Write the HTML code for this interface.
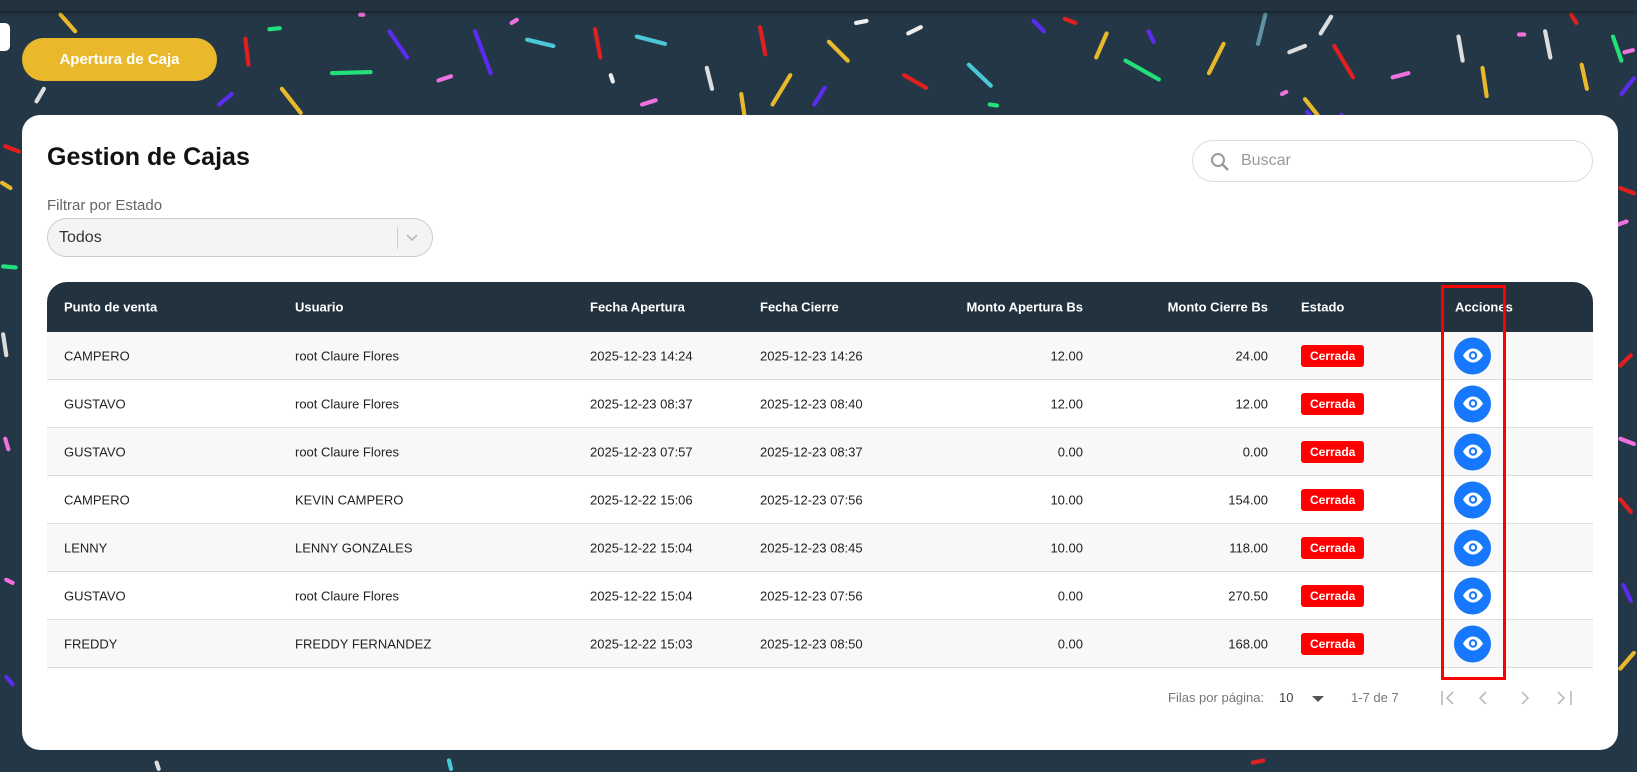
<!DOCTYPE html>
<html><head><meta charset="utf-8"><style>
*{box-sizing:border-box;margin:0;padding:0}
body{width:1637px;height:772px;overflow:hidden;background:#243746;font-family:"Liberation Sans",sans-serif;position:relative}
#bg{position:absolute;left:0;top:0;width:1637px;height:772px}
.topbar{position:absolute;left:0;top:0;width:1637px;height:11px;background:#22323f;box-shadow:0 2px 4px rgba(0,0,0,.4)}
.x{position:absolute;left:-8px;top:23px;width:18px;height:28px;background:#fff;border-radius:5px}
.btn{position:absolute;left:22px;top:38px;width:195px;height:43px;background:#e9b92b;border-radius:22px;color:#fff;font-weight:bold;font-size:15px;line-height:43px;text-align:center}
.card{position:absolute;left:22px;top:115px;width:1596px;height:635px;background:#fff;border-radius:18px}
.abs{position:absolute}
h1{position:absolute;left:25px;top:28px;font-size:25px;font-weight:bold;color:#111}
.search{position:absolute;left:1170px;top:25px;width:401px;height:42px;border:1px solid #ddd;border-radius:21px}
.search span{position:absolute;left:48px;top:11px;font-size:16px;color:#999}
.lbl{position:absolute;left:25px;top:82px;font-size:15px;color:#666}
.sel{position:absolute;left:25px;top:103px;width:386px;height:39px;border:1px solid #ccc;background:#f4f4f4;border-radius:20px}
.sel span{position:absolute;left:11px;top:10px;font-size:16px;color:#333}
.sel i{position:absolute;left:349px;top:8px;width:1px;height:22px;background:#ccc}
.table{position:absolute;left:25px;top:167px;width:1546px;height:387px;border-radius:20px 20px 0 0;overflow:hidden}
.th{height:50px;background:#22323f;color:#fff;font-weight:bold;font-size:13px;position:relative}
.row{height:48px;position:relative;border-bottom:1px solid #ddd;font-size:13px;color:#222;background:#f8f8f8}
.row:nth-child(odd){background:#fff}
.c{position:absolute;top:50%;transform:translateY(-50%);white-space:nowrap}
.r{text-align:right}
.badge{background:#f00;color:#fff;font-weight:bold;font-size:12px;padding:4px 9px;border-radius:3px}
.eye{width:37px;height:37px;border-radius:50%;background:#1677ff;display:flex;align-items:center;justify-content:center}
.redbox{position:absolute;left:1419px;top:170px;width:65px;height:395px;border:3px solid #f00}
.pg{position:absolute;top:575px;font-size:13px;color:#777}
</style></head><body>
<svg id="bg" viewBox="0 0 1568 739" preserveAspectRatio="none" stroke-linecap="round" stroke-width="4">
<g>
<line x1="58" y1="14" x2="72" y2="30" stroke="#e9b92b"/>
<line x1="235" y1="37" x2="238" y2="62" stroke="#e02020"/>
<line x1="258" y1="28" x2="268" y2="27" stroke="#22e07a"/>
<line x1="373" y1="30" x2="390" y2="55" stroke="#5b2cf0"/>
<line x1="318" y1="70" x2="355" y2="69" stroke="#22e07a"/>
<line x1="345" y1="14" x2="348" y2="14" stroke="#f070e0"/>
<line x1="270" y1="85" x2="288" y2="108" stroke="#e9b92b"/>
<line x1="210" y1="100" x2="222" y2="90" stroke="#5b2cf0"/>
<line x1="42" y1="85" x2="35" y2="97" stroke="#ddd"/>
<line x1="420" y1="77" x2="432" y2="73" stroke="#f070e0"/>
<line x1="455" y1="30" x2="470" y2="70" stroke="#5b2cf0"/>
<line x1="490" y1="22" x2="495" y2="19" stroke="#f070e0"/>
<line x1="505" y1="38" x2="530" y2="44" stroke="#4ac8d8"/>
<line x1="570" y1="28" x2="575" y2="55" stroke="#e02020"/>
<line x1="585" y1="72" x2="587" y2="78" stroke="#eee"/>
<line x1="610" y1="35" x2="637" y2="42" stroke="#4ac8d8"/>
<line x1="615" y1="100" x2="628" y2="96" stroke="#f070e0"/>
<line x1="677" y1="65" x2="682" y2="85" stroke="#ddd"/>
<line x1="710" y1="90" x2="713" y2="110" stroke="#e9b92b"/>
<line x1="728" y1="26" x2="733" y2="52" stroke="#e02020"/>
<line x1="740" y1="100" x2="757" y2="72" stroke="#e9b92b"/>
<line x1="794" y1="40" x2="812" y2="58" stroke="#e9b92b"/>
<line x1="780" y1="100" x2="790" y2="84" stroke="#5b2cf0"/>
<line x1="820" y1="22" x2="830" y2="20" stroke="#eee"/>
<line x1="866" y1="72" x2="887" y2="84" stroke="#e02020"/>
<line x1="870" y1="32" x2="882" y2="26" stroke="#eee"/>
<line x1="928" y1="62" x2="949" y2="82" stroke="#4ac8d8"/>
<line x1="948" y1="100" x2="955" y2="101" stroke="#22e07a"/>
<line x1="990" y1="20" x2="1000" y2="30" stroke="#5b2cf0"/>
<line x1="1020" y1="18" x2="1030" y2="22" stroke="#e02020"/>
<line x1="1050" y1="55" x2="1060" y2="32" stroke="#e9b92b"/>
<line x1="1078" y1="58" x2="1110" y2="76" stroke="#22e07a"/>
<line x1="1100" y1="30" x2="1105" y2="40" stroke="#5b2cf0"/>
<line x1="1158" y1="70" x2="1172" y2="42" stroke="#e9b92b"/>
<line x1="1205" y1="42" x2="1212" y2="14" stroke="#5f93a3"/>
<line x1="1235" y1="50" x2="1250" y2="44" stroke="#ddd"/>
<line x1="1265" y1="32" x2="1275" y2="16" stroke="#ddd"/>
<line x1="1228" y1="90" x2="1232" y2="88" stroke="#f070e0"/>
<line x1="1250" y1="95" x2="1262" y2="110" stroke="#e9b92b"/>
<line x1="1252" y1="107" x2="1259" y2="115" stroke="#5b2cf0"/>
<line x1="1278" y1="44" x2="1296" y2="74" stroke="#e02020"/>
<line x1="1285" y1="110" x2="1290" y2="118" stroke="#5b2cf0"/>
<line x1="1334" y1="74" x2="1349" y2="70" stroke="#f070e0"/>
<line x1="1397" y1="35" x2="1401" y2="58" stroke="#ddd"/>
<line x1="1420" y1="65" x2="1424" y2="92" stroke="#e9b92b"/>
<line x1="1455" y1="33" x2="1460" y2="33" stroke="#f070e0"/>
<line x1="1505" y1="14" x2="1510" y2="22" stroke="#e02020"/>
<line x1="1480" y1="30" x2="1485" y2="55" stroke="#ddd"/>
<line x1="1515" y1="62" x2="1520" y2="85" stroke="#e9b92b"/>
<line x1="1545" y1="35" x2="1553" y2="58" stroke="#22e07a"/>
<line x1="1556" y1="50" x2="1564" y2="48" stroke="#f070e0"/>
<line x1="1553" y1="90" x2="1565" y2="75" stroke="#5b2cf0"/>
<line x1="1552" y1="180" x2="1565" y2="185" stroke="#e02020"/>
<line x1="1550" y1="215" x2="1558" y2="212" stroke="#f070e0"/>
<line x1="1552" y1="350" x2="1562" y2="340" stroke="#e02020"/>
<line x1="1552" y1="420" x2="1565" y2="425" stroke="#f070e0"/>
<line x1="1552" y1="478" x2="1562" y2="490" stroke="#e02020"/>
<line x1="1552" y1="640" x2="1565" y2="625" stroke="#e9b92b"/>
<line x1="1555" y1="560" x2="1562" y2="575" stroke="#5b2cf0"/>
<line x1="5" y1="140" x2="18" y2="145" stroke="#e02020"/>
<line x1="2" y1="175" x2="10" y2="180" stroke="#e9b92b"/>
<line x1="3" y1="255" x2="15" y2="256" stroke="#22e07a"/>
<line x1="3" y1="320" x2="6" y2="340" stroke="#ddd"/>
<line x1="5" y1="420" x2="8" y2="430" stroke="#f070e0"/>
<line x1="6" y1="648" x2="12" y2="655" stroke="#5b2cf0"/>
<line x1="6" y1="555" x2="12" y2="558" stroke="#f070e0"/>
<line x1="150" y1="730" x2="152" y2="736" stroke="#ddd"/>
<line x1="430" y1="728" x2="432" y2="736" stroke="#4ac8d8"/>
<line x1="1200" y1="730" x2="1210" y2="728" stroke="#e02020"/>
</g></svg>
<div class="topbar"></div>
<div class="x"></div>
<div class="btn">Apertura de Caja</div>
<div class="card">
<h1>Gestion de Cajas</h1>
<div class="search"><svg class="abs" style="left:17px;top:11px" width="20" height="20" viewBox="0 0 20 20"><circle cx="8" cy="8" r="6" fill="none" stroke="#999" stroke-width="2"/><line x1="12.5" y1="12.5" x2="18" y2="18" stroke="#999" stroke-width="2.4"/></svg><span>Buscar</span></div>
<div class="lbl">Filtrar por Estado</div>
<div class="sel"><span>Todos</span><i></i><svg class="abs" style="left:358px;top:14px" width="12" height="10" viewBox="0 0 12 10"><path d="M1 2l5 5 5-5" fill="none" stroke="#bbb" stroke-width="1.6"/></svg></div>
<div class="table">
<div class="th">
<span class="c" style="left:17px">Punto de venta</span>
<span class="c" style="left:248px">Usuario</span>
<span class="c" style="left:543px">Fecha Apertura</span>
<span class="c" style="left:713px">Fecha Cierre</span>
<span class="c r" style="right:510px">Monto Apertura Bs</span>
<span class="c r" style="right:325px">Monto Cierre Bs</span>
<span class="c" style="left:1254px">Estado</span>
<span class="c" style="left:1408px">Acciones</span>
</div>
<div id="rows"></div>
</div>
<div class="redbox"></div>
<div class="pg" style="left:1146px">Filas por página:</div>
<div class="pg" style="left:1257px;color:#444">10</div>
<svg class="abs" style="left:1290px;top:581px" width="12" height="7"><path d="M0 0h12L6 6z" fill="#555"/></svg>
<div class="pg" style="left:1329px">1-7 de 7</div>
<svg class="abs" style="left:1418px;top:574px" width="140" height="18" viewBox="0 0 140 18" fill="none" stroke="#bbb" stroke-width="1.6"><path d="M2 2v14M13 3l-6 6 6 6"/><path d="M46 3l-6 6 6 6"/><path d="M82 3l6 6-6 6"/><path d="M118 3l6 6-6 6M131 2v14"/></svg>
</div>
<script>
const d=[["CAMPERO","root Claure Flores","2025-12-23 14:24","2025-12-23 14:26","12.00","24.00"],
["GUSTAVO","root Claure Flores","2025-12-23 08:37","2025-12-23 08:40","12.00","12.00"],
["GUSTAVO","root Claure Flores","2025-12-23 07:57","2025-12-23 08:37","0.00","0.00"],
["CAMPERO","KEVIN CAMPERO","2025-12-22 15:06","2025-12-23 07:56","10.00","154.00"],
["LENNY","LENNY GONZALES","2025-12-22 15:04","2025-12-23 08:45","10.00","118.00"],
["GUSTAVO","root Claure Flores","2025-12-22 15:04","2025-12-23 07:56","0.00","270.50"],
["FREDDY","FREDDY FERNANDEZ","2025-12-22 15:03","2025-12-23 08:50","0.00","168.00"]];
const eye='<svg width="22" height="16" viewBox="0 0 22 16"><path d="M1 8C4 3 7.5 1 11 1s7 2 10 7c-3 5-6.5 7-10 7S4 13 1 8z" fill="#fff"/><circle cx="11" cy="8" r="4.2" fill="#1677ff"/><circle cx="11" cy="8" r="2.2" fill="#fff"/></svg>';
let h='';d.forEach((r,i)=>{h+=`<div class="row" style="background:${i%2?'#fff':'#f8f8f8'}"><span class="c" style="left:17px">${r[0]}</span><span class="c" style="left:248px">${r[1]}</span><span class="c" style="left:543px">${r[2]}</span><span class="c" style="left:713px">${r[3]}</span><span class="c r" style="right:510px">${r[4]}</span><span class="c r" style="right:325px">${r[5]}</span><span class="c badge" style="left:1254px">Cerrada</span><span class="c eye" style="left:1407px">${eye}</span></div>`});
document.getElementById('rows').innerHTML=h;
</script>
</body></html>
